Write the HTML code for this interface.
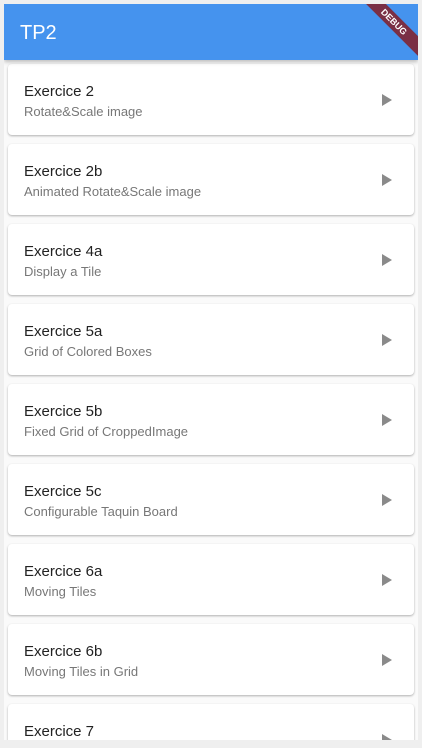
<!DOCTYPE html>
<html><head><style>
*{margin:0;padding:0;box-sizing:border-box}
body{width:422px;height:748px;background:#efefef;font-family:"Liberation Sans",sans-serif;position:relative;overflow:hidden}
#scr{position:absolute;left:4px;top:4px;width:414px;height:736px;background:#fafafa;overflow:hidden}
#bar{position:absolute;left:0;top:0;width:414px;height:56px;background:#4593ee;box-shadow:0 2px 4px rgba(0,0,0,.25);z-index:2}
#bar span{position:absolute;left:16px;top:18px;color:#fff;font-size:20px}
#dbg{position:absolute;right:-26px;top:11px;width:100px;height:14px;background:#7a2f45;transform:rotate(45deg);color:#fff;font-size:9px;font-weight:bold;text-align:center;line-height:14px;z-index:3}
.card{position:absolute;left:4px;width:406px;height:71px;background:#fff;border-radius:4px;box-shadow:0 1px 2px rgba(0,0,0,.3)}
.t{position:absolute;left:16px;top:19px;font-size:15px;color:#222}
.s{position:absolute;left:16px;top:40px;font-size:13px;color:#777}
.a{position:absolute;left:374px;top:30px;width:0;height:0;border-left:10px solid #8a8a8a;border-top:6px solid transparent;border-bottom:6px solid transparent}
</style></head><body>
<div id="scr">
<div id="bar"><span>TP2</span><div id="dbg">DEBUG</div></div>
<div class="card" style="top:60px"><div class="t">Exercice 2</div><div class="s">Rotate&amp;Scale image</div><div class="a"></div></div>
<div class="card" style="top:140px"><div class="t">Exercice 2b</div><div class="s">Animated Rotate&amp;Scale image</div><div class="a"></div></div>
<div class="card" style="top:220px"><div class="t">Exercice 4a</div><div class="s">Display a Tile</div><div class="a"></div></div>
<div class="card" style="top:300px"><div class="t">Exercice 5a</div><div class="s">Grid of Colored Boxes</div><div class="a"></div></div>
<div class="card" style="top:380px"><div class="t">Exercice 5b</div><div class="s">Fixed Grid of CroppedImage</div><div class="a"></div></div>
<div class="card" style="top:460px"><div class="t">Exercice 5c</div><div class="s">Configurable Taquin Board</div><div class="a"></div></div>
<div class="card" style="top:540px"><div class="t">Exercice 6a</div><div class="s">Moving Tiles</div><div class="a"></div></div>
<div class="card" style="top:620px"><div class="t">Exercice 6b</div><div class="s">Moving Tiles in Grid</div><div class="a"></div></div>
<div class="card" style="top:700px"><div class="t">Exercice 7</div><div class="s">Taquin</div><div class="a"></div></div>
</div>
</body></html>
